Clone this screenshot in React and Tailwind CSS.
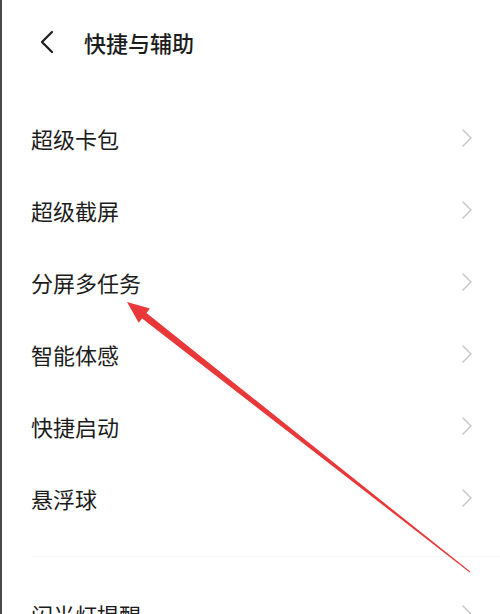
import React from 'react';

const items = ['超级卡包', '超级截屏', '分屏多任务', '智能体感', '快捷启动', '悬浮球'];

const Chevron = () => (
  <svg width="12" height="20" viewBox="0 0 12 20" className="shrink-0">
    <path d="M2 2 L10 10 L2 18" fill="none" stroke="#c9c9c9" strokeWidth="1.6" strokeLinecap="round" strokeLinejoin="round" />
  </svg>
);

const Row = ({ label }) => (
  <div className="h-[72px] flex items-center justify-between pl-[29px] pr-[27px]">
    <span className="text-[22px] leading-none text-[#1c1c1c]">{label}</span>
    <Chevron />
  </div>
);

const App = () => {
  return (
    <div
      className="relative w-[500px] h-[614px] overflow-hidden bg-white border-l-2 border-[#4a4a4a]"
      style={{ fontFamily: '"Noto Sans CJK SC", "Noto Sans", sans-serif' }}
    >
      <div className="h-[84px] flex items-center pl-[36px]">
        <svg width="18" height="24" viewBox="0 0 18 24" className="shrink-0">
          <path d="M14 2 L4 12 L14 22" fill="none" stroke="#1c1c1c" strokeWidth="2.2" strokeLinecap="round" strokeLinejoin="round" />
        </svg>
        <span className="ml-[28px] text-[22px] leading-none font-medium text-[#1c1c1c]">快捷与辅助</span>
      </div>

      <div className="pt-[18px]">
        {items.map((label) => (
          <Row key={label} label={label} />
        ))}
      </div>

      <div className="h-[44px] flex items-center pl-[29px]">
        <div className="w-full h-px bg-[#f7f7f7]" />
      </div>

      <Row label="闪光灯提醒" />

      <svg className="absolute inset-0 pointer-events-none" width="500" height="614" viewBox="0 0 500 614">
        <polygon
          points="125,302 147.9,308.5 144.5,312.9 468.3,571.6 467.7,572.4 140.1,318.4 136.7,322.7"
          fill="#e8383a"
        />
      </svg>
    </div>
  );
};

export default App;
